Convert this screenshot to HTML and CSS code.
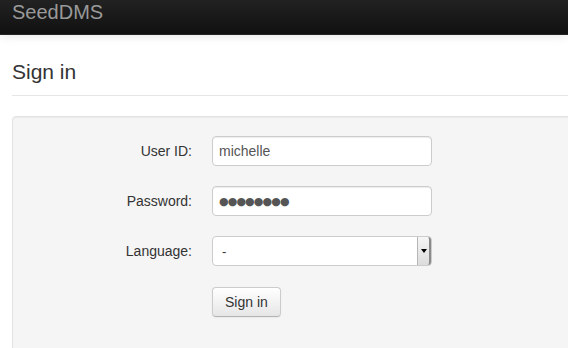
FILE: index.html
```html
<!DOCTYPE html>
<html>
<head>
<meta charset="utf-8">
<title>SeedDMS Sign in</title>
<link rel="stylesheet" href="styles.css">
</head>
<body>
<div class="navbar">
  <span class="brand">SeedDMS</span>
</div>
<div class="container">
  <div class="page-header">
    <h1 class="title">Sign in</h1>
  </div>
  <div class="well">
    <form class="form-horizontal">
      <div class="control-group">
        <label class="control-label">User ID:</label>
        <div class="controls">
          <input class="text-input" type="text" value="michelle">
        </div>
      </div>
      <div class="control-group">
        <label class="control-label">Password:</label>
        <div class="controls">
          <input class="text-input password-input" type="text" value="●●●●●●●●">
        </div>
      </div>
      <div class="control-group">
        <label class="control-label">Language:</label>
        <div class="controls">
          <div class="select-wrap">
            <select class="select-input"><option>-</option></select>
            <span class="select-button"><span class="select-arrow"></span></span>
          </div>
        </div>
      </div>
      <div class="control-group">
        <div class="controls">
          <button class="btn" type="button">Sign in</button>
        </div>
      </div>
    </form>
  </div>
</div>
</body>
</html>
```
FILE: styles.css
```css
html, body {
  margin: 0;
  padding: 0;
  overflow: hidden;
  background: #fff;
}
body {
  font-family: "Liberation Sans", Arial, sans-serif;
  font-size: 14px;
  line-height: 20px;
  color: #333;
  width: 568px;
  height: 348px;
}
.navbar {
  height: 35px;
  background: linear-gradient(#222222, #111111);
  border-bottom: 1px solid #252525;
  box-sizing: border-box;
  box-shadow: 0 1px 10px rgba(0, 0, 0, 0.1);
  padding: 2px 12px 0;
  position: relative;
  z-index: 1;
}
.brand {
  display: block;
  font-size: 20px;
  line-height: 20px;
  color: #999;
}
.container {
  padding-left: 12px;
  width: 960px;
}
.page-header {
  margin-top: 25px;
  padding-bottom: 11px;
  border-bottom: 1px solid #e5e5e5;
}
.title {
  margin: 0;
  font-size: 21px;
  line-height: 24px;
  font-weight: normal;
  color: #333;
}
.well {
  margin-top: 20px;
  background: #f5f5f5;
  border: 1px solid #e3e3e3;
  border-radius: 4px;
  box-shadow: inset 0 1px 1px rgba(0, 0, 0, 0.05);
  padding: 19px;
  min-height: 260px;
}
.form-horizontal {
  margin: 0;
}
.control-group {
  display: flex;
  margin-bottom: 20px;
}
.control-label {
  width: 160px;
  padding-top: 5px;
  text-align: right;
  flex: none;
}
.controls {
  margin-left: 20px;
}
.control-group .controls:first-child {
  margin-left: 180px;
}
.text-input {
  display: block;
  box-sizing: border-box;
  width: 220px;
  height: 30px;
  padding: 4px 6px;
  margin: 0;
  font-family: "Liberation Sans", Arial, sans-serif;
  font-size: 14px;
  line-height: 20px;
  color: #555;
  background: #fff;
  border: 1px solid #ccc;
  border-radius: 4px;
  box-shadow: inset 0 1px 1px rgba(0, 0, 0, 0.075);
  outline: none;
}
.password-input {
  font-family: "DejaVu Sans", sans-serif;
  font-size: 11px;
  letter-spacing: -0.9px;
}
.select-wrap {
  position: relative;
  width: 220px;
  height: 30px;
}
.select-input {
  display: block;
  box-sizing: border-box;
  width: 220px;
  height: 30px;
  margin: 0;
  padding: 0 9px;
  appearance: none;
  -webkit-appearance: none;
  font-family: "Liberation Sans", Arial, sans-serif;
  font-size: 13px;
  color: #333;
  background: #fff;
  border: 1px solid #ccc;
  border-radius: 4px;
  outline: none;
}
.select-button {
  position: absolute;
  top: 1px;
  right: 1px;
  width: 14px;
  height: 28px;
  box-sizing: border-box;
  background: linear-gradient(#f6f6f6, #dcdcdc);
  border-left: 1px solid #b5b5b5;
  border-right: 2px solid #8a8a8a;
  border-radius: 0 3px 3px 0;
}
.select-arrow {
  position: absolute;
  left: 3px;
  top: 12px;
  width: 0;
  height: 0;
  border-left: 3px solid transparent;
  border-right: 3px solid transparent;
  border-top: 4px solid #000;
}
.btn {
  display: inline-block;
  box-sizing: border-box;
  height: 30px;
  padding: 4px 12px;
  margin-top: 1px;
  font-family: "Liberation Sans", Arial, sans-serif;
  font-size: 14px;
  line-height: 20px;
  color: #333;
  background: linear-gradient(#ffffff, #e6e6e6);
  border: 1px solid #cccccc;
  border-bottom-color: #b3b3b3;
  border-radius: 4px;
  box-shadow: inset 0 1px 0 rgba(255, 255, 255, 0.2), 0 1px 2px rgba(0, 0, 0, 0.05);
}
```
